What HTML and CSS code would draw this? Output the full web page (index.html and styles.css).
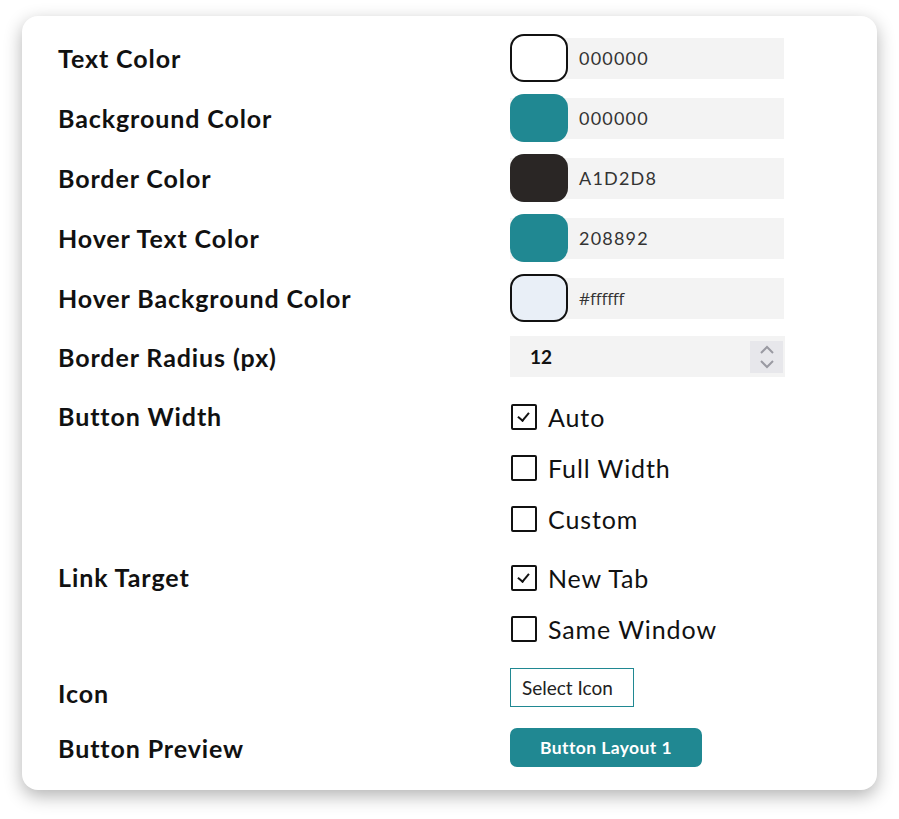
FILE: index.html
```html
<!doctype html>
<html lang="en">
<head>
    <meta charset="UTF-8">
    <title>Button Settings</title>
    <link rel="stylesheet" href="styles.css">
</head>
<body>
    <div class="card">
        <div class="row colorRow">
            <div class="label">Text Color</div>
            <div class="colorField">
                <span class="swatch swatch-white"></span>
                <span class="hex">000000</span>
            </div>
        </div>
        <div class="row colorRow">
            <div class="label">Background Color</div>
            <div class="colorField">
                <span class="swatch swatch-teal"></span>
                <span class="hex">000000</span>
            </div>
        </div>
        <div class="row colorRow">
            <div class="label">Border Color</div>
            <div class="colorField">
                <span class="swatch swatch-dark"></span>
                <span class="hex">A1D2D8</span>
            </div>
        </div>
        <div class="row colorRow">
            <div class="label">Hover Text Color</div>
            <div class="colorField">
                <span class="swatch swatch-teal"></span>
                <span class="hex">208892</span>
            </div>
        </div>
        <div class="row colorRow">
            <div class="label">Hover Background Color</div>
            <div class="colorField">
                <span class="swatch swatch-light"></span>
                <span class="hex hex-plain">#ffffff</span>
            </div>
        </div>
        <div class="row numberRow">
            <div class="label">Border Radius (px)</div>
            <div class="numberField">
                <span class="numValue">12</span>
                <span class="spinner">
                    <svg width="16" height="28" viewBox="0 0 16 28">
                        <path d="M2 10 L8 4 L14 10" fill="none" stroke="#9a9aa2" stroke-width="2"/>
                        <path d="M2 18 L8 24 L14 18" fill="none" stroke="#9a9aa2" stroke-width="2"/>
                    </svg>
                </span>
            </div>
        </div>
        <div class="row groupRow">
            <div class="label label-top">Button Width</div>
            <div class="checkGroup">
                <label class="check"><span class="box checked"></span>Auto</label>
                <label class="check"><span class="box"></span>Full Width</label>
                <label class="check"><span class="box"></span>Custom</label>
            </div>
        </div>
        <div class="row groupRow linkRow">
            <div class="label label-top">Link Target</div>
            <div class="checkGroup">
                <label class="check"><span class="box checked"></span>New Tab</label>
                <label class="check"><span class="box"></span>Same Window</label>
            </div>
        </div>
        <div class="row iconRow">
            <div class="label label-icon">Icon</div>
            <button class="selectIcon">Select Icon</button>
        </div>
        <div class="row previewRow">
            <div class="label">Button Preview</div>
            <button class="previewBtn">Button Layout 1</button>
        </div>
    </div>
</body>
</html>
```

FILE: styles.css
```css
*{
    margin: 0;
    padding: 0;
    box-sizing: border-box;
}
body{
    background: #fff;
    padding: 16px 22px 29px;
    font-family: "Lato", "Noto Sans", sans-serif;
    color: #111;
}
.card{
    background: #fff;
    border-radius: 16px;
    box-shadow: 0 6px 18px rgba(0,0,0,0.3);
    padding: 18px 36px 23px;
    height: 774px;
}
.row{
    display: flex;
    align-items: center;
}
.label{
    width: 452px;
    flex-shrink: 0;
    font-size: 25px;
    font-weight: 700;
    letter-spacing: 0.9px;
    color: #111;
}
.label-top{
    align-self: flex-start;
    line-height: 50px;
}
.label-icon{
    padding-top: 11px;
}
.colorRow{
    height: 48px;
    margin-bottom: 12px;
}
.colorField{
    display: flex;
    align-items: center;
    width: 274px;
    height: 41px;
    background: #f3f3f3;
}
.swatch{
    display: block;
    width: 58px;
    height: 48px;
    flex-shrink: 0;
    border-radius: 14px;
}
.swatch-white{
    background: #fff;
    border: 2px solid #111;
}
.swatch-teal{
    background: #208892;
}
.swatch-dark{
    background: #2a2625;
}
.swatch-light{
    background: #e9eff7;
    border: 2px solid #111;
}
.hex{
    padding-left: 11px;
    font-size: 18px;
    letter-spacing: 1.2px;
    color: #333;
}
.hex-plain{
    letter-spacing: 0;
    font-family: "Open Sans", sans-serif;
    font-size: 17px;
}
.numberRow{
    margin-top: 14px;
}
.numberField{
    display: flex;
    align-items: center;
    justify-content: space-between;
    width: 275px;
    height: 41px;
    background: #f3f3f3;
    padding: 0 2px 0 20px;
}
.numValue{
    font-size: 19px;
    font-weight: 700;
    color: #111;
}
.spinner{
    display: flex;
    align-items: center;
    justify-content: center;
    width: 33px;
    height: 32px;
    background: #e7e7eb;
}
.groupRow{
    align-items: flex-start;
    margin-top: 14px;
}
.linkRow{
    margin-top: 8px;
}
.checkGroup{
    display: flex;
    flex-direction: column;
}
.check{
    display: flex;
    align-items: center;
    height: 51px;
    font-size: 25px;
    color: #111;
    letter-spacing: 0.9px;
}
.box{
    width: 26px;
    height: 26px;
    border: 2px solid #111;
    border-radius: 2px;
    margin: 0 11px 0 1px;
    position: relative;
}
.box.checked::after{
    content: "";
    position: absolute;
    left: 7px;
    top: 4px;
    width: 5px;
    height: 9px;
    border-right: 2px solid #111;
    border-bottom: 2px solid #111;
    transform: rotate(40deg);
}
.iconRow{
    margin-top: 13px;
}
.selectIcon{
    width: 124px;
    height: 39px;
    background: #fff;
    border: 1px solid #208892;
    font-family: "Lato", sans-serif;
    font-size: 19px;
    color: #222;
    text-align: left;
    padding-left: 11px;
}
.previewRow{
    margin-top: 20px;
}
.previewBtn{
    width: 192px;
    height: 39px;
    background: #208892;
    border: none;
    border-radius: 7px;
    color: #fff;
    font-family: "Lato", sans-serif;
    font-weight: 700;
    font-size: 17.5px;
    letter-spacing: 0.4px;
}
```
